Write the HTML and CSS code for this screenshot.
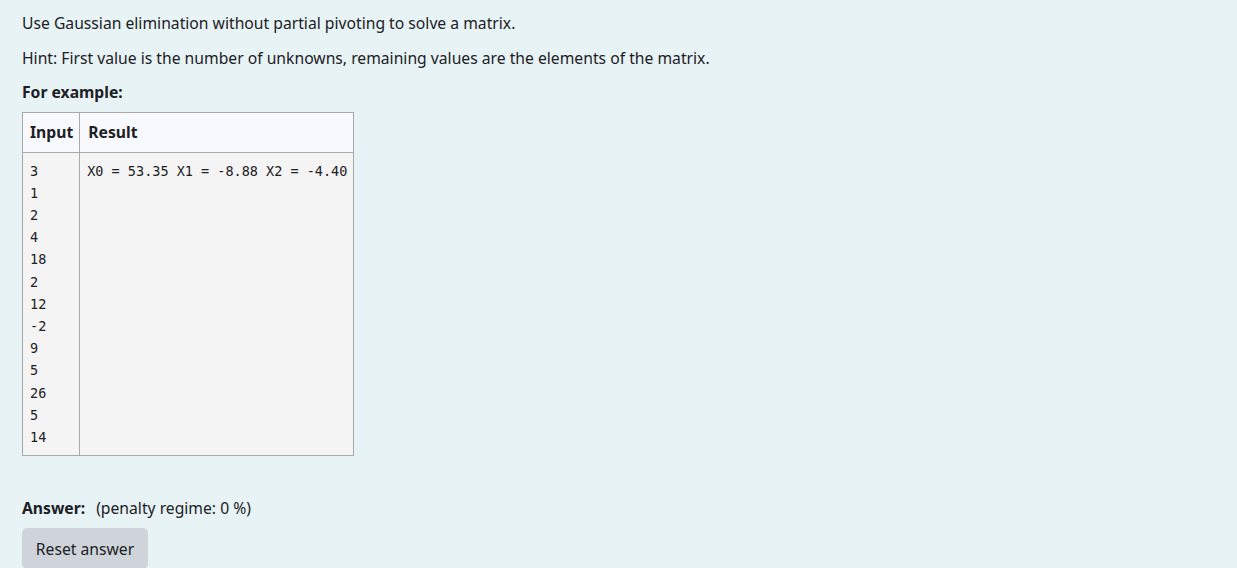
FILE: index.html
```html
<!DOCTYPE html>
<html lang="en">
<head>
<meta charset="utf-8">
<title>Question</title>
<link rel="stylesheet" href="styles.css">
</head>
<body>
<div class="question">
  <p class="line">Use Gaussian elimination without partial pivoting to solve a matrix.</p>
  <p class="line">Hint: First value is the number of unknowns, remaining values are the elements of the matrix.</p>
  <h5 class="example-title">For example:</h5>
  <table class="examples">
    <thead>
      <tr><th class="col-input">Input</th><th class="col-result">Result</th></tr>
    </thead>
    <tbody>
      <tr>
        <td class="col-input"><pre>3
1
2
4
18
2
12
-2
9
5
26
5
14</pre></td>
        <td class="col-result"><pre>X0 = 53.35 X1 = -8.88 X2 = -4.40</pre></td>
      </tr>
    </tbody>
  </table>
  <div class="answer-row">
    <span class="answer-label">Answer:</span>
    <span class="penalty">(penalty regime: 0 %)</span>
  </div>
  <button class="btn-reset" type="button">Reset answer</button>
</div>
</body>
</html>
```
FILE: styles.css
```css
html, body {
  margin: 0;
  padding: 0;
}
body {
  background: #e7f3f5;
  color: #1d2125;
  font-family: "Noto Sans", "Open Sans", sans-serif;
  font-size: 15.7px;
  line-height: 22.5px;
}
.question {
  padding: 12px 22px 0 22px;
}
.line {
  margin: 0 0 12px 0;
}
.example-title {
  margin: 0 0 8px 0;
  font-size: 15.7px;
  font-weight: 700;
  line-height: 22.5px;
}
.examples {
  border-collapse: collapse;
  border: 1px solid #aaaaaa;
}
.examples th {
  background: #f8f9ff;
  text-align: left;
  font-weight: 700;
  padding: 0 6px 0 7px;
  height: 39px;
  border: 1px solid #aaaaaa;
}
.examples th.col-result {
  padding-left: 8px;
}
.examples td {
  background: #f4f4f4;
  vertical-align: top;
  padding: 7px 7px 7px 7px;
  border: 1px solid #aaaaaa;
}
.examples td.col-input {
  padding-right: 6px;
}
.examples td.col-result {
  padding-right: 6px;
}
.examples pre {
  margin: 0;
  font-family: "DejaVu Sans Mono", "Liberation Mono", monospace;
  font-size: 13.5px;
  line-height: 22.2px;
  color: #1d2125;
}
.answer-row {
  margin-top: 41px;
  display: flex;
  gap: 11px;
  align-items: baseline;
}
.answer-label {
  font-weight: 700;
}
.btn-reset {
  margin-top: 8px;
  font-family: inherit;
  font-size: 15.7px;
  line-height: 22.5px;
  color: #1d2125;
  background: #ced4da;
  border: 1px solid #ced4da;
  border-radius: 5px;
  padding: 9px 10px 8px 10px;
  width: 126px;
}
```
